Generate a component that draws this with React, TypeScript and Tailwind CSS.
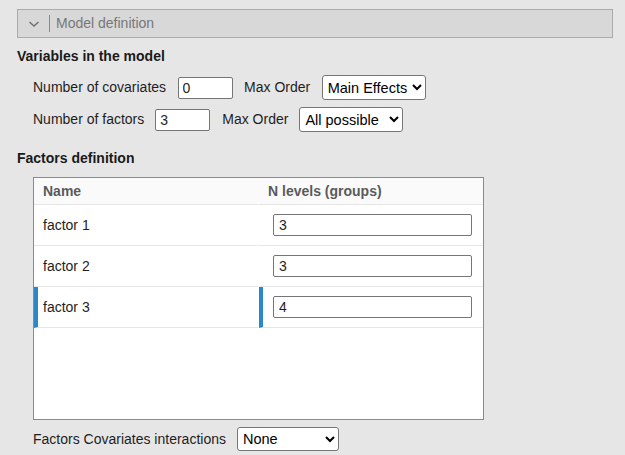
import React from 'react';

const font = { fontFamily: '"Liberation Sans", Arial, sans-serif' };

const rows = [
  { name: 'factor 1', levels: '3' },
  { name: 'factor 2', levels: '3' },
  { name: 'factor 3', levels: '4', selected: true },
];

const App: React.FC = () => {
  return (
    <div
      className="w-[625px] h-[455px] overflow-hidden bg-[#e6e6e6] pt-[9px] pl-[17px] text-[14px] text-[#1e1e1e]"
      style={font}
    >
      {/* Collapsible header */}
      <div className="w-[596px] h-[29px] flex items-center bg-[#d8d8d8] border border-[#ababab]">
        <svg className="ml-[10px] w-[12px] h-[8px]" viewBox="0 0 12 8" fill="none">
          <path d="M1.5 2 L6 6 L10.5 2" stroke="#6f6f6f" strokeWidth="1.4" />
        </svg>
        <div className="ml-[9px] w-px h-[17px] bg-[#8a8a8a]" />
        <span className="ml-[6px] text-[#777777]">Model definition</span>
      </div>

      {/* Variables in the model */}
      <div className="mt-[8px] leading-[20px] font-bold text-[#1a1a1a]">Variables in the model</div>
      <div className="pl-[16px]">
        <div className="mt-[9px] h-[25px] flex items-center">
          <span>Number of covariates</span>
          <input
            defaultValue="0"
            className="ml-[11.5px] w-[55px] h-[22px] pl-[4px] bg-white border border-[#767676] rounded-[2px] outline-none"
          />
          <span className="ml-[11.5px]">Max Order</span>
          <select
            defaultValue="main"
            className="ml-[11.5px] w-[104px] h-[25px] pl-px bg-white border border-[#767676] rounded-[3px] text-[14.5px] text-black"
          >
            <option value="main">Main Effects</option>
          </select>
        </div>
        <div className="mt-[7px] h-[25px] flex items-center">
          <span>Number of factors</span>
          <input
            defaultValue="3"
            className="ml-[11px] w-[55px] h-[22px] pl-[4px] bg-white border border-[#767676] rounded-[2px] outline-none"
          />
          <span className="ml-[12px]">Max Order</span>
          <select
            defaultValue="all"
            className="ml-[11px] w-[104px] h-[25px] pl-px bg-white border border-[#767676] rounded-[3px] text-[14.5px] text-black"
          >
            <option value="all">All possible</option>
          </select>
        </div>
      </div>

      {/* Factors definition */}
      <div className="mt-[16px] leading-[20px] font-bold text-[#1a1a1a]">Factors definition</div>
      <div className="pl-[16px]">
        <div className="mt-[9px] w-[451px] h-[243px] bg-white border border-[#8a8a8a]">
          <div className="flex h-[27px] bg-[#fafafa]">
            <div className="w-[224px] pl-[9px] flex items-center font-bold text-[#5a5a5a] border-b border-[#e6e6e6]">
              Name
            </div>
            <div className="w-[224px] ml-px pl-[9px] flex items-center font-bold text-[#5a5a5a] border-b border-[#e6e6e6]">
              N levels (groups)
            </div>
          </div>
          {rows.map((r) => (
            <div key={r.name} className="flex h-[41px]">
              <div
                className={`w-[224px] flex items-center border-b border-[#e6e6e6] ${
                  r.selected ? 'border-l-[4px] border-l-[#2b88c8] pl-[5px]' : 'pl-[9px]'
                }`}
              >
                {r.name}
              </div>
              <div
                className={`w-[224px] ml-px flex items-center border-b border-[#e6e6e6] ${
                  r.selected ? 'border-l-[4px] border-l-[#2b88c8] pl-[10px]' : 'pl-[14px]'
                }`}
              >
                <input
                  defaultValue={r.levels}
                  className="w-[199px] h-[22px] pl-[5px] bg-white border border-[#767676] rounded-[2px] outline-none"
                />
              </div>
            </div>
          ))}
        </div>

        <div className="mt-[7px] h-[24px] flex items-center">
          <span>Factors Covariates interactions</span>
          <select
            defaultValue="none"
            className="ml-[11px] w-[102px] h-[24px] pl-px bg-white border border-[#767676] rounded-[3px] text-[14.5px] text-black"
          >
            <option value="none">None</option>
          </select>
        </div>
      </div>
    </div>
  );
};

export default App;
